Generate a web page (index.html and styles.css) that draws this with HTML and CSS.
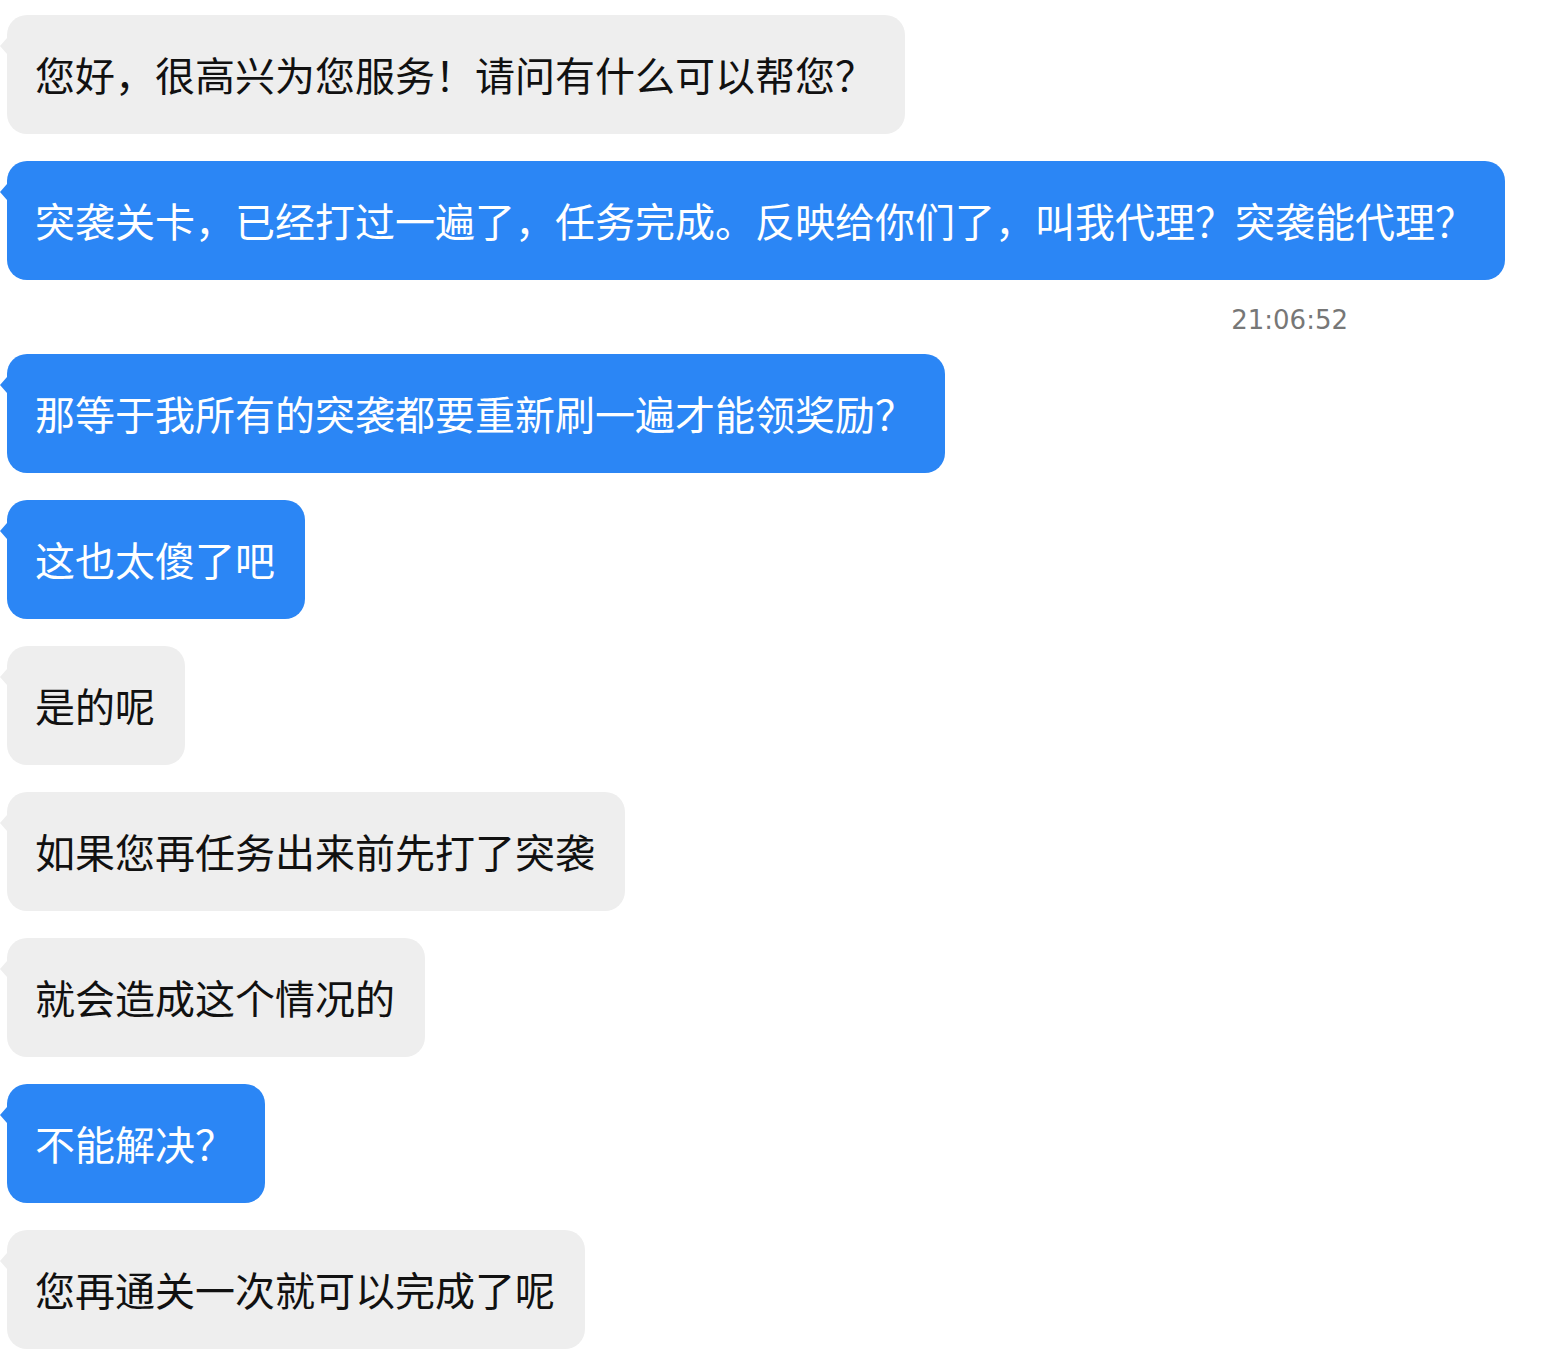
FILE: index.html
```html
<!DOCTYPE html>
<html lang="zh-CN">
<head>
    <meta charset="UTF-8">
    <meta name="viewport" content="width=device-width, initial-scale=1.0">
    <title>客服对话</title>
    <link rel="stylesheet" href="styles.css">
</head>
<body>
    <section class="chat">
        <div class="msg msg-in">您好，很高兴为您服务！请问有什么可以帮您？</div>
        <div class="msg msg-out">突袭关卡，已经打过一遍了，任务完成。反映给你们了，叫我代理？突袭能代理？</div>
        <div class="time">21:06:52</div>
        <div class="msg msg-out">那等于我所有的突袭都要重新刷一遍才能领奖励？</div>
        <div class="msg msg-out">这也太傻了吧</div>
        <div class="msg msg-in">是的呢</div>
        <div class="msg msg-in">如果您再任务出来前先打了突袭</div>
        <div class="msg msg-in">就会造成这个情况的</div>
        <div class="msg msg-out">不能解决？</div>
        <div class="msg msg-in">您再通关一次就可以完成了呢</div>
    </section>
</body>
</html>
```

FILE: styles.css
```css
body {
  margin: 0;
  background-color: #fff;
  font-family: "Noto Sans CJK SC", "Noto Sans", sans-serif;
}

.chat {
  display: flex;
  flex-direction: column;
  align-items: flex-start;
  padding: 15px 0 0 7px;
}

.msg {
  position: relative;
  padding: 30px 30px 30px 28px;
  margin-bottom: 27px;
  font-size: 40px;
  line-height: 59px;
  border-radius: 20px;
  white-space: nowrap;
}

.msg::before {
  content: "";
  position: absolute;
  left: -7px;
  top: 23px;
  border-top: 8px solid transparent;
  border-bottom: 8px solid transparent;
  border-right: 7px solid transparent;
}

.msg-in {
  background-color: #eeeeee;
  color: #111;
}

.msg-in::before {
  border-right-color: #eeeeee;
}

.msg-out {
  background-color: #2b86f5;
  color: #fff;
}

.msg-out::before {
  border-right-color: #2b86f5;
}

.time {
  align-self: stretch;
  text-align: right;
  padding-right: 193px;
  margin-bottom: 21px;
  font-family: "DejaVu Sans", sans-serif;
  font-size: 26px;
  line-height: 26px;
  color: #777;
}
```
